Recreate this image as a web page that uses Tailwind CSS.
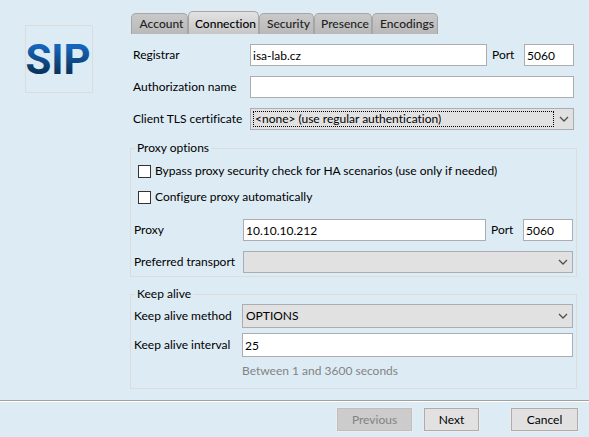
<!DOCTYPE html>
<html lang="en">
<head>
<meta charset="utf-8">
<title>SIP account</title>
<script src="https://cdn.jsdelivr.net/npm/@tailwindcss/browser@4"></script>
</head>
<body class="flex min-h-screen flex-col bg-[#ddebf4] font-['Lato','Open_Sans',sans-serif] text-[12px] leading-[16px] text-black [font-variant-ligatures:none]">
<form class="flex grow flex-col">
  <div class="flex grow">
    <div class="shrink-0 py-[25px] pl-[25px] pr-[37px]">
      <svg class="block size-[68px] border border-[#dcdcdc]" viewBox="0 0 66 66" role="img" aria-label="SIP">
        <defs><linearGradient id="sip" x1="0" y1="0" x2="0" y2="1"><stop offset="0.25" stop-color="#1464b9"/><stop offset="0.75" stop-color="#0a355f"/></linearGradient></defs>
        <text x="32" y="48" text-anchor="middle" font-family="Roboto, sans-serif" font-weight="700" font-size="42" fill="url(#sip)">SIP</text>
      </svg>
    </div>
    <main class="min-w-0 grow pr-[12px] pt-[11px]">
      <nav class="flex h-[23px] items-end pl-px font-medium leading-[18px] text-[#222]" role="tablist">
        <button type="button" role="tab" class="h-[21px] w-[57px] rounded-t-[5px] border border-b-0 border-[#a6a6a6] bg-linear-to-b from-[#c9c9c9] to-[#b9b9b9] pl-[4px]">Account</button>
        <button type="button" role="tab" aria-selected="true" class="h-[23px] w-[71px] rounded-t-[5px] border border-b-0 border-[#a6a6a6] bg-linear-to-b from-[#e2e2e2] to-[#c6c6c6] pl-[4px] pt-[2px] text-black">Connection</button>
        <button type="button" role="tab" class="h-[21px] w-[55px] rounded-t-[5px] border border-b-0 border-[#a6a6a6] bg-linear-to-b from-[#c9c9c9] to-[#b9b9b9] pl-[4px]">Security</button>
        <button type="button" role="tab" class="h-[21px] w-[58px] rounded-t-[5px] border border-b-0 border-[#a6a6a6] bg-linear-to-b from-[#c9c9c9] to-[#b9b9b9] pl-[4px]">Presence</button>
        <button type="button" role="tab" class="h-[21px] w-[66px] rounded-t-[5px] border border-b-0 border-[#a6a6a6] bg-linear-to-b from-[#c9c9c9] to-[#b9b9b9] pl-[4px]">Encodings</button>
      </nav>

      <div class="flex flex-col gap-[10px] pb-[10px] pl-[3px] pr-[3px] pt-[10px]">
        <div class="flex items-center">
          <label for="registrar" class="w-[117px] shrink-0">Registrar</label>
          <input id="registrar" value="isa-lab.cz" class="h-[22px] min-w-0 grow border border-[#abadb3] bg-white px-[2px]">
          <label for="port" class="w-[37px] shrink-0 pl-[5px]">Port</label>
          <input id="port" value="5060" class="h-[22px] w-[50px] border border-[#abadb3] bg-white px-[2px]">
        </div>
        <div class="flex items-center">
          <label for="auth" class="w-[117px] shrink-0">Authorization name</label>
          <input id="auth" class="h-[22px] min-w-0 grow border border-[#abadb3] bg-white px-[2px]">
        </div>
        <div class="flex items-center">
          <label for="cert" class="w-[117px] shrink-0">Client TLS certificate</label>
          <div class="relative flex h-[22px] min-w-0 grow border border-[#abadb3] bg-[#e1e1e1] py-[2px] pl-[2px] pr-[19px]">
            <select id="cert" class="w-full appearance-none border border-dotted border-black px-[1px] leading-[14px]"><option>&lt;none&gt; (use regular authentication)</option></select>
            <svg class="pointer-events-none absolute right-[4px] top-[6px] h-[8px] w-[10px]" viewBox="0 0 10 8" fill="none" stroke="#505050" stroke-width="1.3"><path d="M1 2l4 4 4-4"/></svg>
          </div>
        </div>
      </div>

      <fieldset class="min-w-0 border border-[#dcdcdc] pb-[3px] pl-[3px] pr-[3px]">
        <legend class="ml-[1px] px-[2px]">Proxy options</legend>
        <div class="flex flex-col gap-[10px] pl-[4px] pt-[7px]">
          <label class="flex items-center gap-[4px]"><input type="checkbox" class="size-[13px] appearance-none border border-[#333] bg-white">Bypass proxy security check for HA scenarios (use only if needed)</label>
          <label class="flex items-center gap-[4px]"><input type="checkbox" class="size-[13px] appearance-none border border-[#333] bg-white">Configure proxy automatically</label>
        </div>
        <div class="flex items-center pt-[14px]">
          <label for="proxy" class="w-[109px] shrink-0">Proxy</label>
          <input id="proxy" value="10.10.10.212" class="h-[22px] min-w-0 grow border border-[#abadb3] bg-white px-[2px]">
          <label for="pport" class="w-[37px] shrink-0 pl-[5px]">Port</label>
          <input id="pport" value="5060" class="h-[22px] w-[50px] border border-[#abadb3] bg-white px-[2px]">
        </div>
        <div class="flex items-center pt-[10px]">
          <label for="transport" class="w-[109px] shrink-0 whitespace-nowrap">Preferred transport</label>
          <div class="relative flex h-[22px] min-w-0 grow">
            <select id="transport" class="w-full appearance-none border border-[#abadb3] bg-[#e1e1e1] px-[3px]"><option></option></select>
            <svg class="pointer-events-none absolute right-[5px] top-[7px] h-[8px] w-[10px]" viewBox="0 0 10 8" fill="none" stroke="#505050" stroke-width="1.3"><path d="M1 2l4 4 4-4"/></svg>
          </div>
        </div>
      </fieldset>

      <fieldset class="mt-[9px] min-w-0 border border-[#dcdcdc] pb-[9px] pl-[3px] pr-[3px]">
        <legend class="ml-[1px] px-[2px]">Keep alive</legend>
        <div class="flex items-center pt-[2px]">
          <label for="method" class="w-[108px] shrink-0 whitespace-nowrap">Keep alive method</label>
          <div class="relative flex h-[24px] min-w-0 grow">
            <select id="method" class="w-full appearance-none border border-[#abadb3] bg-[#e1e1e1] px-[3px]"><option>OPTIONS</option></select>
            <svg class="pointer-events-none absolute right-[5px] top-[8px] h-[8px] w-[10px]" viewBox="0 0 10 8" fill="none" stroke="#505050" stroke-width="1.3"><path d="M1 2l4 4 4-4"/></svg>
          </div>
        </div>
        <div class="flex items-center pt-[5px]">
          <label for="interval" class="w-[108px] shrink-0 whitespace-nowrap">Keep alive interval</label>
          <input id="interval" value="25" aria-describedby="hint" class="h-[24px] min-w-0 grow border border-[#abadb3] bg-white px-[2px]">
        </div>
        <p id="hint" class="pl-[108px] pt-[6px] text-[#838383]">Between 1 and 3600 seconds</p>
      </fieldset>
    </main>
  </div>
  <footer class="flex h-[37px] shrink-0 justify-end border-t border-[#a0a0a0] pr-[11px] pt-[7px] shadow-[inset_0_1px_0_#fff]">
    <button type="button" disabled class="mr-[12px] h-[23px] w-[75px] border border-[#bfbfbf] bg-[#cccccc] text-[#838383] outline outline-[#ececec]">Previous</button>
    <button type="button" class="mr-[32px] h-[23px] w-[55px] border border-[#adadad] bg-[#e1e1e1] outline outline-[#ececec]">Next</button>
    <button type="button" class="h-[23px] w-[67px] border border-[#adadad] bg-[#e1e1e1] outline outline-[#ececec]">Cancel</button>
  </footer>
</form>
</body>
</html>
